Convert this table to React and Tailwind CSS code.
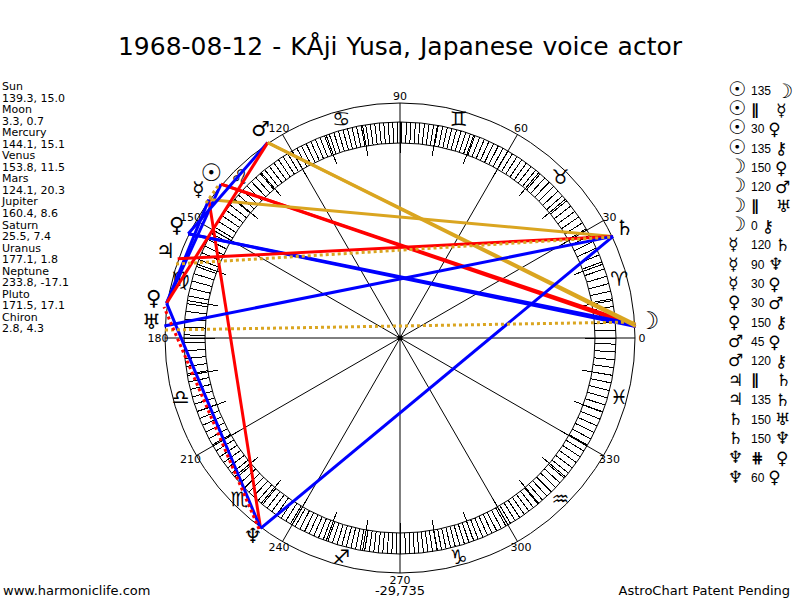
import React from "react";

const CX = 400;
const CY = 338;

const pt = (lon, r) => [
  CX + r * Math.cos((lon * Math.PI) / 180),
  CY - r * Math.sin((lon * Math.PI) / 180),
];

const planets = {
  sun: { lon: 139.3, g: "☉", size: 24 },
  moon: { lon: 3.3, g: "☽", size: 24 },
  mercury: { lon: 144.1, g: "☿", size: 20 },
  venus: { lon: 153.8, g: "♀", size: 21 },
  mars: { lon: 124.1, g: "♂", size: 21 },
  jupiter: { lon: 160.4, g: "♃", size: 21 },
  saturn: { lon: 25.5, g: "♄", size: 21 },
  uranus: { lon: 177.1, g: "♅", size: 21 },
  neptune: { lon: 233.8, g: "♆", size: 21 },
  pluto: { lon: 171.5, g: "♀", size: 21 },
  chiron: { lon: 2.8, g: "⚷", size: 0 },
};

const positions = [
  ["Sun", "139.3, 15.0"],
  ["Moon", "3.3, 0.7"],
  ["Mercury", "144.1, 15.1"],
  ["Venus", "153.8, 11.5"],
  ["Mars", "124.1, 20.3"],
  ["Jupiter", "160.4, 8.6"],
  ["Saturn", "25.5, 7.4"],
  ["Uranus", "177.1, 1.8"],
  ["Neptune", "233.8, -17.1"],
  ["Pluto", "171.5, 17.1"],
  ["Chiron", "2.8, 4.3"],
];

const aspectList = [
  ["☉", "135", "☽"],
  ["☉", "∥", "☿"],
  ["☉", "30", "♀"],
  ["☉", "135", "⚷"],
  ["☽", "150", "♀"],
  ["☽", "120", "♂"],
  ["☽", "∥", "♅"],
  ["☽", "0", "⚷"],
  ["☿", "120", "♄"],
  ["☿", "90", "♆"],
  ["☿", "30", "♀"],
  ["♀", "30", "♂"],
  ["♀", "150", "⚷"],
  ["♂", "45", "♀"],
  ["♂", "120", "⚷"],
  ["♃", "∥", "♄"],
  ["♃", "135", "♄"],
  ["♄", "150", "♅"],
  ["♄", "150", "♆"],
  ["♆", "⋕", "♀"],
  ["♆", "60", "♀"],
];

const RED = "#ff0000";
const BLUE = "#0000ff";
const GOLD = "#daa520";

// solid aspect lines, drawn in order
const lines = [
  ["sun", "moon", RED],
  ["sun", "pluto", BLUE],
  ["sun", "chiron", RED],
  ["moon", "venus", BLUE],
  ["moon", "mars", GOLD],
  ["mercury", "saturn", GOLD],
  ["mercury", "neptune", RED],
  ["mercury", "pluto", BLUE],
  ["venus", "mars", BLUE],
  ["venus", "chiron", BLUE],
  ["mars", "pluto", RED],
  ["mars", "chiron", GOLD],
  ["jupiter", "saturn", RED],
  ["saturn", "uranus", BLUE],
  ["saturn", "neptune", BLUE],
  ["neptune", "pluto", BLUE],
];

// parallels (dotted)
const dotted = [
  [[218, 186], [206, 203], GOLD],
  [[165, 330], [634, 322], GOLD],
  [[176, 264], [613, 237], GOLD],
  [[259, 529], [164, 307], RED],
];

const signs = ["♈", "♉", "♊", "♋", "♌", "♍", "♎", "♏", "♐", "♑", "♒", "♓"];

const big = (g) => g === "☉" || g === "☽";

// band ticks sit closer together near 90/270 than near 0/180
const tickAngles = (() => {
  const out = [];
  let a = 0;
  while (a < 359.5) {
    out.push(a);
    const c = Math.cos((a * Math.PI) / 180);
    a += 1.2 + 0.9 * c * c;
  }
  return out;
})();

const Chart = () => {
  const ticks = tickAngles.map((a, i) => {
    const [x1, y1] = pt(a, 195);
    const [x2, y2] = pt(a, 216);
    return <line key={i} x1={x1} y1={y1} x2={x2} y2={y2} stroke="#000" strokeWidth="1" shapeRendering="crispEdges" />;
  });

  const longTicks = [];
  for (let k = 0; k < 36; k++) {
    const a = k * 10;
    const [x1, y1] = pt(a, 185);
    const [x2, y2] = pt(a, 216);
    longTicks.push(<line key={k} x1={x1} y1={y1} x2={x2} y2={y2} stroke="#000" strokeWidth="1" shapeRendering="crispEdges" />);
  }

  const cusps = [];
  for (let k = 0; k < 12; k++) {
    const a = k * 30;
    const [x, y] = pt(a, 235);
    const [lx, ly] = pt(a, 242);
    cusps.push(
      <g key={k}>
        <line x1={CX} y1={CY} x2={x} y2={y} stroke="#000" strokeWidth="1" />
        <text x={lx} y={ly} textAnchor="middle" dominantBaseline="central" fontSize="11" fill="#000">
          {a}
        </text>
      </g>
    );
  }

  return (
    <svg width="560" height="504" viewBox="120 78 560 504" overflow="visible" className="block shrink-0">
      <circle cx={CX} cy={CY} r="235" fill="none" stroke="#000" strokeWidth="1" />
      <circle cx={CX} cy={CY} r="216" fill="none" stroke="#000" strokeWidth="1" />
      <circle cx={CX} cy={CY} r="195" fill="none" stroke="#000" strokeWidth="1" />
      {ticks}
      {longTicks}
      {cusps}
      <circle cx={CX} cy={CY} r="2.5" fill="#000" />
      {signs.map((s, i) => {
        const [x, y] = pt(15 + i * 30, 227);
        return (
          <text key={s} x={x} y={y} textAnchor="middle" dominantBaseline="central" fontSize="20" fill="#000">
            {s}
          </text>
        );
      })}
      {lines.map(([a, b, c], i) => {
        const [x1, y1] = pt(planets[a].lon, 236);
        const [x2, y2] = pt(planets[b].lon, 236);
        return <line key={i} x1={x1} y1={y1} x2={x2} y2={y2} stroke={c} strokeWidth="3" />;
      })}
      {dotted.map(([p1, p2, c], i) => (
        <line
          key={i}
          x1={p1[0]}
          y1={p1[1]}
          x2={p2[0]}
          y2={p2[1]}
          stroke={c}
          strokeWidth="3"
          strokeDasharray="3 3"
        />
      ))}
      {Object.entries(planets)
        .filter(([, p]) => p.size > 0)
        .map(([k, p]) => {
          const [x, y] = pt(p.lon, 249);
          return (
            <text
              key={k}
              x={x}
              y={y - 3}
              textAnchor="middle"
              dominantBaseline="central"
              fontSize={p.size}
              fontWeight="bold"
              fill="#000"
            >
              {p.g}
            </text>
          );
        })}
    </svg>
  );
};

const Glyph = ({ g }) => (
  <span className={`${big(g) ? "text-[20px]" : "text-[17px]"} font-bold leading-none`}>{g}</span>
);

const App = () => {
  return (
    <div className="w-[800px] h-[600px] bg-white text-black flex flex-col overflow-hidden font-['DejaVu_Sans',sans-serif]">
      <div className="h-[78px] pt-[32px] text-center text-[25px] leading-[30px] [word-spacing:1px]">
        1968-08-12 - KÅji Yusa, Japanese voice actor
      </div>
      <div className="flex h-[504px]">
        <div className="w-[120px] shrink-0 pl-[2px] pt-[3px] text-[11px] leading-[11.55px]">
          {positions.map(([n, v]) => (
            <div key={n}>
              <div>{n}</div>
              <div>{v}</div>
            </div>
          ))}
        </div>
        <Chart />
        <div className="flex-1 pl-[48px] pt-[3px]">
          {aspectList.map(([a, asp, b], i) => {
            const sym = asp === "∥" || asp === "⋕";
            return (
              <div key={i} className="flex items-center h-[19.35px]">
                <span className="w-[23px]">
                  <Glyph g={a} />
                </span>
                {sym ? (
                  <span className="w-[25px] text-[15px] font-bold leading-none">{asp}</span>
                ) : (
                  <span className="mr-[4px] text-[12px] leading-none font-['Liberation_Sans',sans-serif]">{asp}</span>
                )}
                <Glyph g={b} />
              </div>
            );
          })}
        </div>
      </div>
      <div className="grid grid-cols-3 h-[18px] text-[13px] leading-[18px]">
        <div className="pl-[3px]">www.harmoniclife.com</div>
        <div className="text-center">-29,735</div>
        <div className="text-right pr-[10px]">AstroChart Patent Pending</div>
      </div>
    </div>
  );
};

export default App;
